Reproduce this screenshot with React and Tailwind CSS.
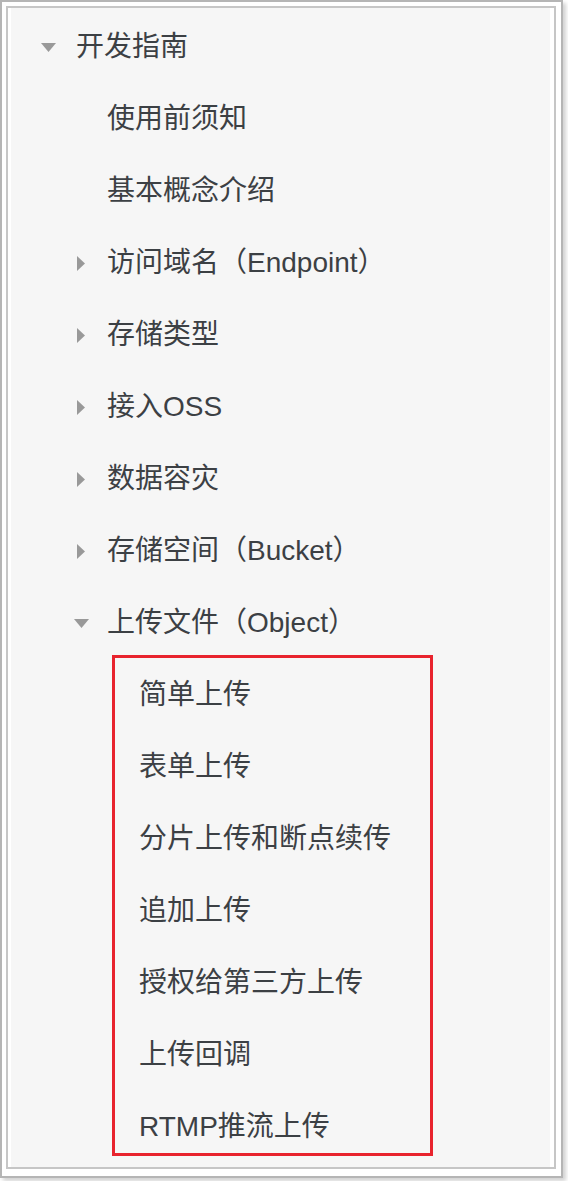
const tree = [
  { label: '使用前须知' },
  { label: '基本概念介绍' },
  { label: '访问域名（Endpoint）', arrow: 'right' },
  { label: '存储类型', arrow: 'right' },
  { label: '接入OSS', arrow: 'right' },
  { label: '数据容灾', arrow: 'right' },
  { label: '存储空间（Bucket）', arrow: 'right' },
  { label: '上传文件（Object）', arrow: 'down' },
];

const uploads = [
  '简单上传',
  '表单上传',
  '分片上传和断点续传',
  '追加上传',
  '授权给第三方上传',
  '上传回调',
  'RTMP推流上传',
];

function CaretDown() {
  return (
    <svg width="15" height="9" viewBox="0 0 15 9" className="shrink-0">
      <path d="M0 0H15L7.5 9Z" fill="#999999" />
    </svg>
  );
}

function CaretRight() {
  return (
    <svg width="8" height="15" viewBox="0 0 8 15" className="shrink-0">
      <path d="M0 0L8 7.5L0 15Z" fill="#999999" />
    </svg>
  );
}

export default function App() {
  return (
    <div
      className="h-[1181px] w-[568px] bg-white text-[28px] text-[#3c4044]"
      style={{ fontFamily: '"Liberation Sans", "Noto Sans CJK SC", sans-serif' }}
    >
      <div className="h-[1178px] w-[563px] border-2 border-[#b5b5b5] bg-white pb-[7px] pl-[4px] pr-[5px] pt-[4px] shadow-[3px_3px_4px_rgba(0,0,0,0.18)]">
        <div className="h-full border-2 border-[#c6c6c6] bg-white pl-[3px] pr-[4px]">
          <div className="h-full bg-[#f6f6f6] pt-[3px]">
            <div className="flex h-[72px] items-center pl-[30px]">
              <CaretDown />
              <span className="ml-[20px]">开发指南</span>
            </div>

            {tree.map((item) => (
              <div key={item.label} className="flex h-[72px] items-center pl-[66px]">
                <div className="flex w-[30px] items-center">
                  {item.arrow === 'right' ? <CaretRight /> : null}
                  {item.arrow === 'down' ? (
                    <span className="-ml-[3px]">
                      <CaretDown />
                    </span>
                  ) : null}
                </div>
                <span>{item.label}</span>
              </div>
            ))}

            <div className="relative">
              {uploads.map((label) => (
                <div key={label} className="flex h-[72px] items-center pl-[128px]">
                  {label}
                </div>
              ))}
              {/* red annotation box */}
              <div className="absolute bottom-[7px] left-[101px] top-[-4px] w-[321px] border-[3px] border-[#e8232d]" />
            </div>
          </div>
        </div>
      </div>
    </div>
  );
}
